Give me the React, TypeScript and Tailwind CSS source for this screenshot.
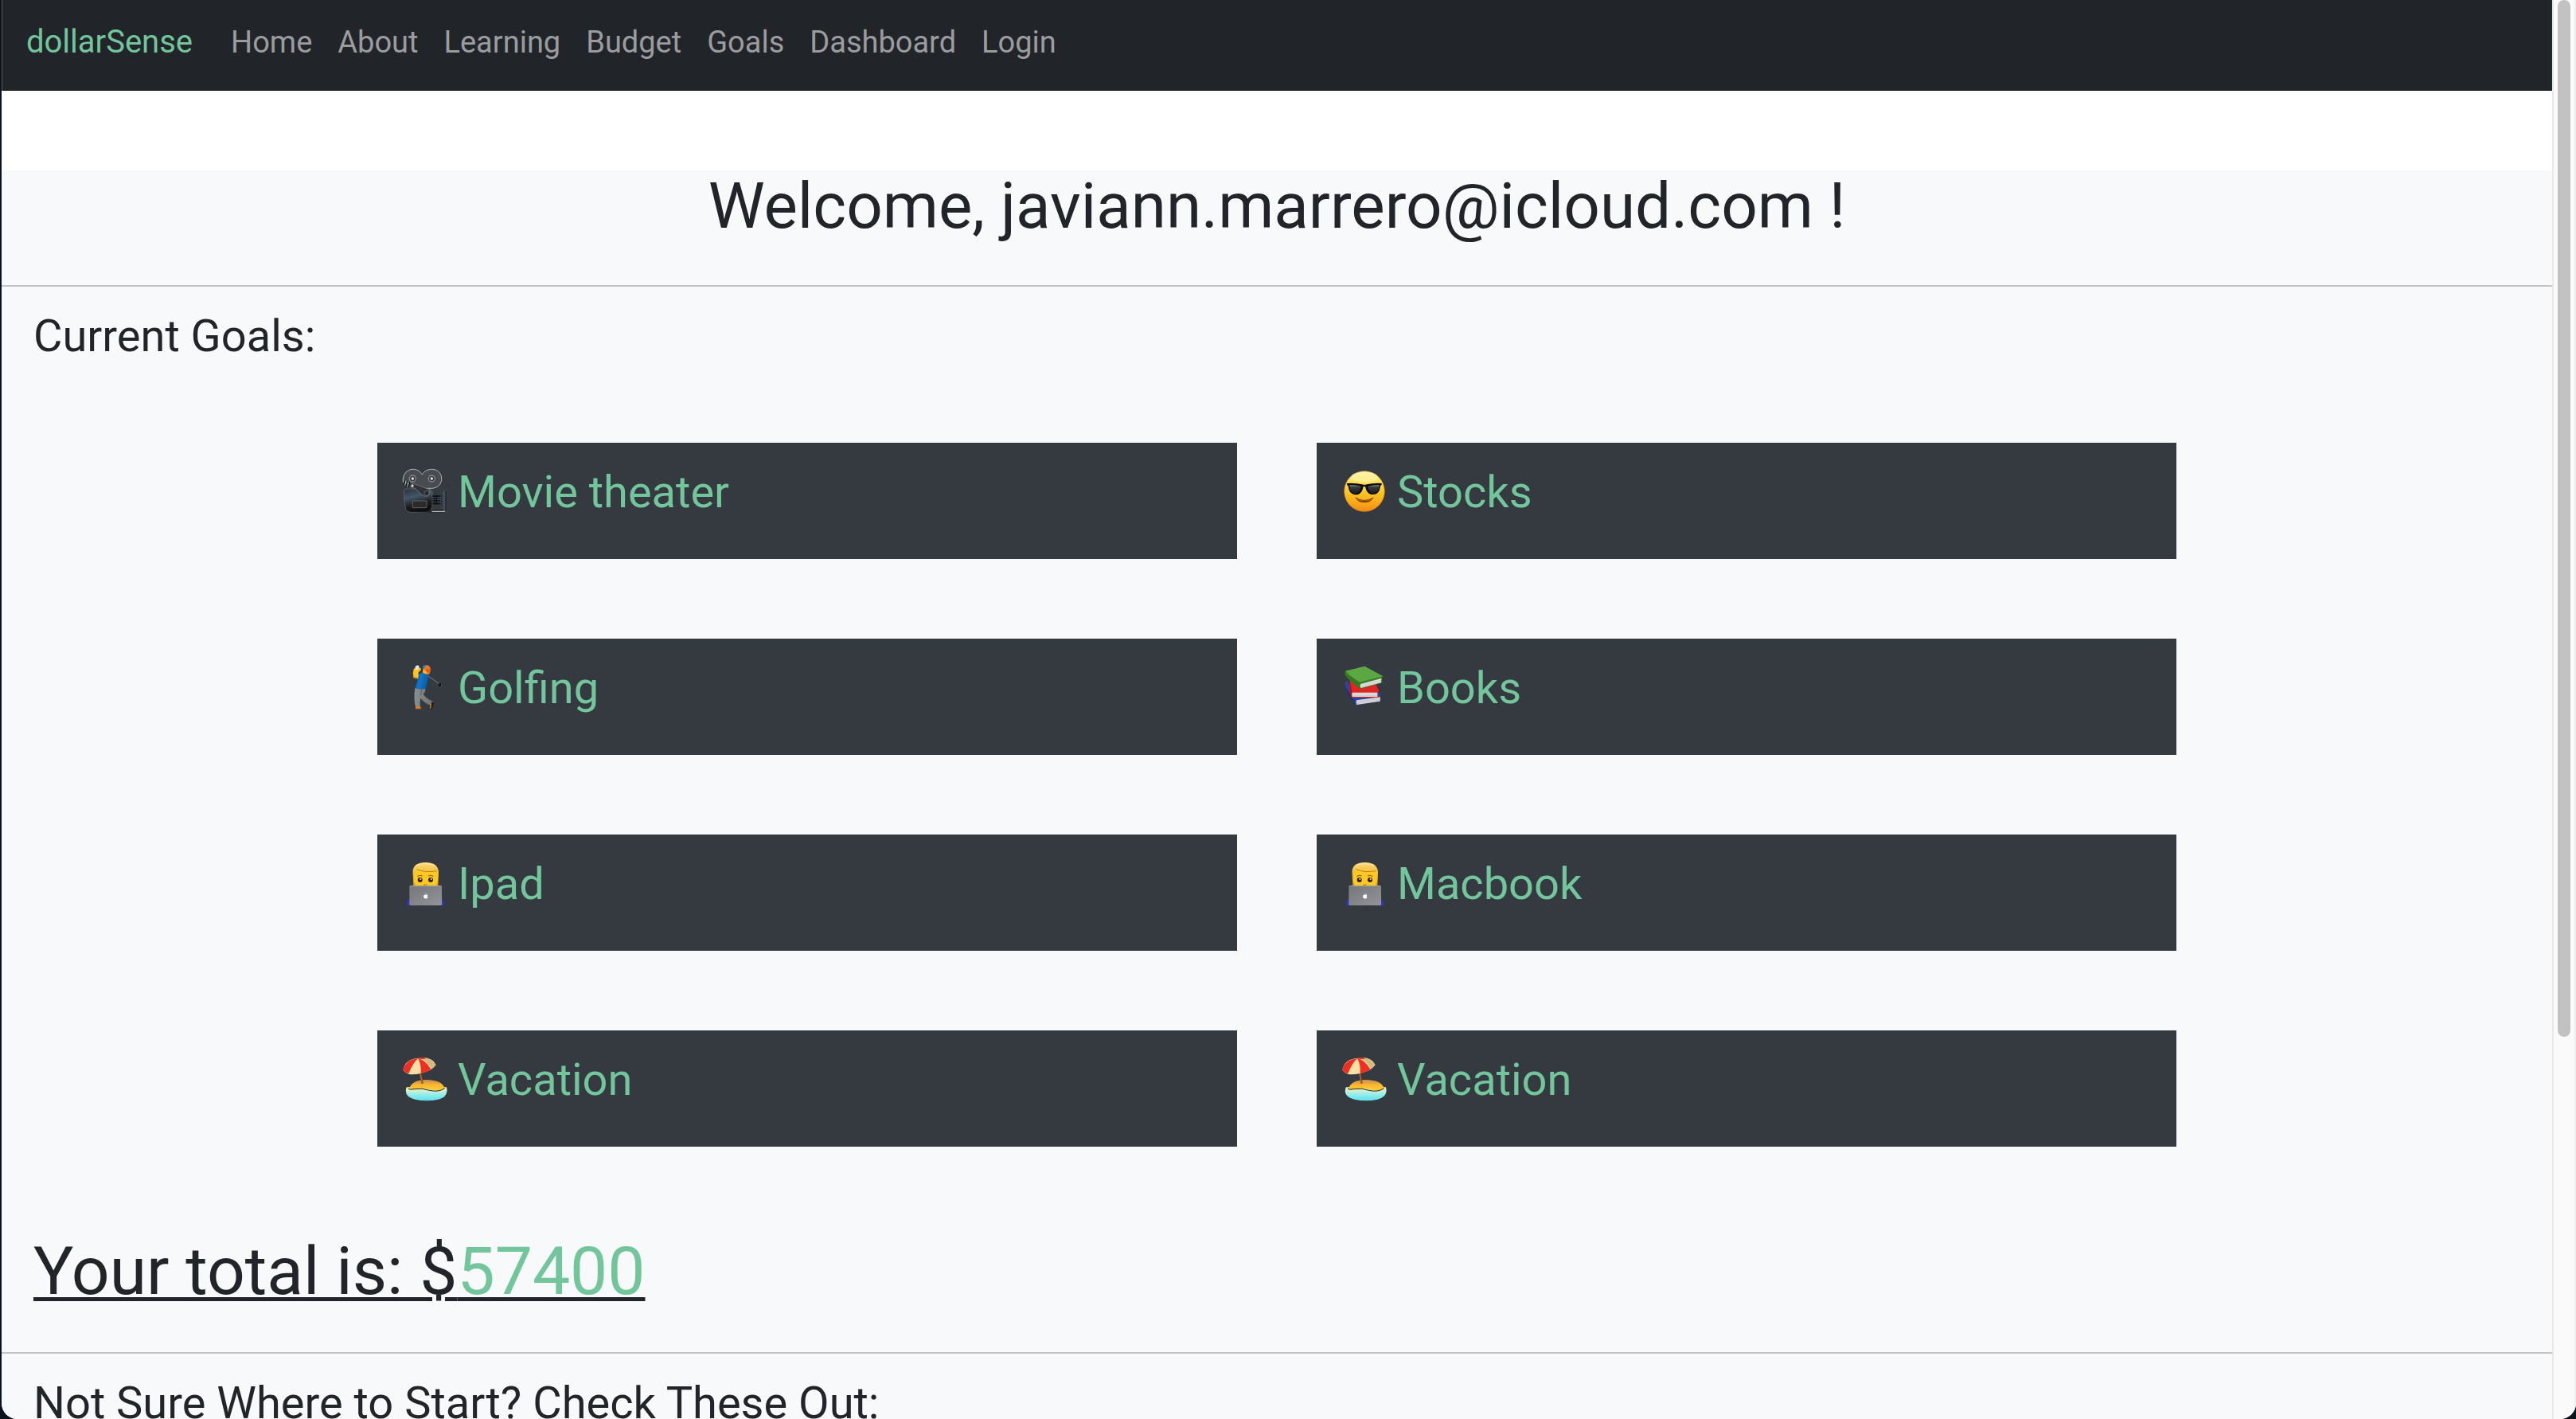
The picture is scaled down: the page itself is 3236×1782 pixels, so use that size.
import React from "react";

const links = ["Home", "About", "Learning", "Budget", "Goals", "Dashboard", "Login"];

const iconClass = "h-15 w-15 shrink-0";

function MovieCamera() {
  return (
    <svg className={iconClass} viewBox="132 138 180 180" aria-hidden="true">
      <defs>
        <linearGradient id="camBody" x1="0" y1="0" x2="0.3" y2="1">
          <stop offset="0" stopColor="#2c3034" />
          <stop offset="0.4" stopColor="#43566a" />
          <stop offset="0.75" stopColor="#1d1c1e" />
          <stop offset="1" stopColor="#0f0f10" />
        </linearGradient>
        <linearGradient id="camHood" x1="0" y1="0" x2="1" y2="0">
          <stop offset="0" stopColor="#15181b" />
          <stop offset="0.6" stopColor="#3c4852" />
          <stop offset="1" stopColor="#101214" />
        </linearGradient>
      </defs>
      <path d="M139 196C136 168 154 148 176 148c16 0 26 7 35 20 8-13 20-20 36-20 22 0 37 15 37 36 0 20-15 35-37 36h-46z" fill="#484c50" stroke="#b4b7ba" strokeWidth="3" />
      <circle cx="175" cy="183" r="12" fill="#34383b" stroke="#85898d" strokeWidth="4" />
      <circle cx="175" cy="183" r="5" fill="#e3e6e8" />
      <circle cx="247" cy="183" r="12" fill="#34383b" stroke="#85898d" strokeWidth="4" />
      <circle cx="247" cy="183" r="5" fill="#e3e6e8" />
      <path d="M142 232q0-10 8-10h82q16 2 17 12v52q-2 22-24 24h-58q-14-1-18-12-8-32-7-66z" fill="url(#camBody)" stroke="#666c71" strokeWidth="2" />
      <path d="M165 197l70 26q10 12-2 26-14 4-26-7l-20-20-26-10z" fill="#303438" stroke="#85898d" strokeWidth="2" />
      <circle cx="228" cy="238" r="9" fill="#25292c" stroke="#777c80" strokeWidth="2" />
      <path d="M146 192l-3 14M155 193l-4 19M164 195l-4 20" stroke="#0d0e0f" strokeWidth="4" />
      <path d="M150 192l-4 16M159 194l-4 20" stroke="#d5d8da" strokeWidth="2.5" />
      <circle cx="174" cy="210" r="5" fill="#d9dbdd" />
      <rect x="175" y="267" width="53" height="26" rx="2" fill="#2b2a2b" stroke="#7b8084" strokeWidth="2" />
      <rect x="250" y="246" width="34" height="34" fill="#15181b" />
      <path d="M250 254h32M250 262h32M250 271h32" stroke="#526370" strokeWidth="3" />
      <path d="M258 246v34M266 244v38" stroke="#0b0c0d" strokeWidth="3" />
      <path d="M282 240l22-16v86l-22-24z" fill="url(#camHood)" stroke="#586168" strokeWidth="1.5" />
      <path d="M288 236v54M294 232v64" stroke="#5b6a76" strokeWidth="2" />
      <path d="M180 309q60 3 68-8l40 0 8 9z" fill="#1a1b1c" />
      <path d="M247 307h50" stroke="#b9bcbe" strokeWidth="4" />
    </svg>
  );
}

function CoolFace() {
  return (
    <svg className={iconClass} viewBox="132 138 180 180" aria-hidden="true">
      <defs>
        <linearGradient id="faceFill" x1="0" y1="0" x2="0" y2="1">
          <stop offset="0" stopColor="#fdf0a0" />
          <stop offset="0.2" stopColor="#fdea6c" />
          <stop offset="0.5" stopColor="#fcc92b" />
          <stop offset="0.8" stopColor="#fba614" />
          <stop offset="1" stopColor="#ee8a1c" />
        </linearGradient>
        <linearGradient id="lens" x1="0" y1="0" x2="0" y2="1">
          <stop offset="0" stopColor="#7c8184" />
          <stop offset="0.3" stopColor="#34383a" />
          <stop offset="1" stopColor="#1c1e20" />
        </linearGradient>
      </defs>
      <circle cx="222" cy="231" r="76" fill="url(#faceFill)" stroke="#d9811c" strokeWidth="2" />
      <ellipse cx="222" cy="177" rx="50" ry="20" fill="#fff6c0" opacity="0.45" />
      <path d="M187 253q35 22 70 0-8 21-35 21t-35-21z" fill="#83470f" />
      <path d="M192 260q30 14 60 0-8 7-30 7t-30-7z" fill="#e9a021" />
      <path d="M155 201q34-2 58 4 9 3 18 0 24-6 57-4l-2 7-4 3c-2 20-9 32-27 32-18 1-26-12-29-28-4-4-5-4-9 0-2 16-11 29-28 29-19-1-26-14-28-33l-4-3z" fill="#0c0d0e" />
      <path d="M166 207q24-1 43 5-3 25-21 27c-15 0-21-10-22-32z" fill="url(#lens)" />
      <path d="M278 207q-24-1-43 5 3 25 21 27c15 0 21-10 22-32z" fill="url(#lens)" />
    </svg>
  );
}

function Golfer() {
  return (
    <svg className={iconClass} viewBox="132 126 180 180" aria-hidden="true">
      <defs>
        <linearGradient id="golfShirt" x1="0" y1="0" x2="1" y2="0.3">
          <stop offset="0" stopColor="#0c559f" />
          <stop offset="0.5" stopColor="#1175cb" />
          <stop offset="1" stopColor="#0b5aa6" />
        </linearGradient>
        <linearGradient id="golfPants" x1="0" y1="0" x2="1" y2="0">
          <stop offset="0" stopColor="#8c8f91" />
          <stop offset="1" stopColor="#6c6f72" />
        </linearGradient>
      </defs>
      <path d="M231 175l48 34" stroke="#85898c" strokeWidth="2.5" />
      <ellipse cx="279" cy="210" rx="7" ry="6" fill="#101112" />
      <path d="M284 206v10" stroke="#7b7e80" strokeWidth="2" />
      <path d="M214 148q0-11 11-12 14-1 17 12 2 14-5 22-8 4-17-2l-6-8z" fill="#e8791f" />
      <path d="M214 138q6-4 13-1-7 3-8 12l-6-2z" fill="#1580da" />
      <circle cx="232" cy="158" r="7" fill="#f04a1d" />
      <path d="M216 150l-4 14 14 8 6-8z" fill="#f5b51d" />
      <path d="M179 150l10-6q8 2 8 9v21l8-4 2 8-8 8-20-2q-5-16 0-34z" fill="#fcc419" />
      <path d="M194 145q11-2 13 6-2 9-13 12z" fill="#f7bd1c" />
      <path d="M185 141q7-7 14-3 2 9-5 17l-9-4z" fill="#e4e4e3" />
      <path d="M177 180l18 6" stroke="#e59413" strokeWidth="4" />
      <path d="M198 172q6-9 14-7l20 7q5 9-1 24l-7 30q-20 4-40-2l9-28z" fill="url(#golfShirt)" />
      <path d="M184 223q19 6 39 2 1 12-8 20 12 18 40 29l-11 14q-24-9-39-28-3 16-2 33H186q-8-28-2-70z" fill="url(#golfPants)" />
      <path d="M206 250l3-22" stroke="#5c5f62" strokeWidth="3" />
      <path d="M187 291h18l1 10h-21z" fill="#e57914" />
      <path d="M187 301h18" stroke="#4a4e84" strokeWidth="2" />
      <path d="M246 276q8-4 9 2-1 14-8 24-7-1-7-9z" fill="#2a1b12" />
      <path d="M244 280l-2 19" stroke="#d88d17" strokeWidth="4" />
    </svg>
  );
}

function BookStack() {
  return (
    <svg className={iconClass} viewBox="132 876 180 180" aria-hidden="true">
      <path d="M149 950l8-7 30 62 90-14 8 4-4 2v20l4 2-94 18-6-7-35-58z" fill="#2b459c" />
      <path d="M192 1018l90-12-1 16-88 13q-4-8-1-17z" fill="#d6d6da" />
      <path d="M193 1024l88-13M193 1030l88-13" stroke="#b5b6bd" strokeWidth="1.5" />
      <path d="M149 966l3 14 36 54-6-16z" fill="#1d2f77" />
      <path d="M167 942l98 12 12 32-5 3v16l5 3-102 0-8-20z" fill="#e02622" />
      <path d="M175 989h96v16h-96q-3-8 0-16z" fill="#dedede" />
      <path d="M176 995h95M176 1001h95" stroke="#bdbdbd" strokeWidth="1.5" />
      <path d="M167 946l8 40v22l-8-20z" fill="#a91517" />
      <path d="M149 908l74-18 69 38-3 4-1 16 6 3-88 25q-42-32-57-53z" fill="#357a20" />
      <path d="M150 908l73-18 69 38-86 22q-34-18-56-42z" fill="#5ca744" />
      <path d="M207 957l79-22-1 17-76 20q-6-7-2-15z" fill="#e0e0de" />
      <path d="M208 962l77-20M209 968l76-20" stroke="#b9bab8" strokeWidth="1.5" />
    </svg>
  );
}

function Technologist() {
  return (
    <svg className={iconClass} viewBox="132 864 180 180" aria-hidden="true">
      <defs>
        <linearGradient id="hair" x1="0" y1="0" x2="0" y2="1">
          <stop offset="0" stopColor="#fbd87a" />
          <stop offset="0.5" stopColor="#f2bb35" />
          <stop offset="1" stopColor="#dd9a14" />
        </linearGradient>
        <linearGradient id="laptop" x1="0" y1="0" x2="1" y2="1">
          <stop offset="0" stopColor="#75777b" />
          <stop offset="1" stopColor="#929498" />
        </linearGradient>
      </defs>
      <path d="M152 1041q1-20 14-28h116q12 8 13 28z" fill="#2b37c4" />
      <path d="M176 920q-4-40 48-41 50 1 49 41l-2 50h-93z" fill="url(#hair)" />
      <path d="M180 922q6-4 10-17 34 13 76 7 4 6 4 18 1 26-8 38h-75q-9-16-7-46z" fill="#fdc922" />
      <path d="M190 905q34 14 76 6" fill="none" stroke="#bf8419" strokeWidth="3" />
      <path d="M190 890q30-12 68 0" fill="none" stroke="#fce5a0" strokeWidth="4" />
      <path d="M193 932q9-7 19-2M234 930q10-5 19 2" fill="none" stroke="#a06512" strokeWidth="4" />
      <circle cx="203" cy="945" r="9" fill="#33200e" />
      <circle cx="243" cy="945" r="9" fill="#33200e" />
      <circle cx="205" cy="942" r="3" fill="#f5e9d8" />
      <circle cx="245" cy="942" r="3" fill="#f5e9d8" />
      <path d="M217 962q7 5 13 0" fill="none" stroke="#d97f17" strokeWidth="4" />
      <rect x="163" y="967" width="122" height="74" rx="4" fill="url(#laptop)" />
      <path d="M165 968h118" stroke="#a8aaad" strokeWidth="2.5" />
      <path d="M224 1001q8-4 7 2-2 4 1 7-3 8-8 5-6 2-8-6 0-10 8-8zM223 1000q1-5 4-6 0 5-4 6z" fill="#ffffff" />
    </svg>
  );
}

function BeachUmbrella() {
  return (
    <svg className={iconClass} viewBox="132 132 180 180" aria-hidden="true">
      <defs>
        <linearGradient id="water" x1="0" y1="0" x2="0" y2="1">
          <stop offset="0.2" stopColor="#d9efd0" />
          <stop offset="0.6" stopColor="#8cecec" />
          <stop offset="1" stopColor="#5fe0ea" />
        </linearGradient>
        <linearGradient id="sand" x1="0" y1="0" x2="0" y2="1">
          <stop offset="0" stopColor="#c98c4c" />
          <stop offset="0.5" stopColor="#fab932" />
          <stop offset="1" stopColor="#fccd2c" />
        </linearGradient>
      </defs>
      <path d="M152 256q-12 36 32 46 44 9 88 0 40-10 31-46z" fill="url(#water)" />
      <path d="M162 262q10-34 66-34 60 2 68 33-10 12-42 6-40-10-70-3-14 4-22-2z" fill="url(#sand)" />
      <path d="M159 262q5 5 22 1 30-5 58 5 34 8 57-8" fill="none" stroke="#2b2520" strokeWidth="3" />
      <path d="M204 200l8 42" stroke="#8c4a1d" strokeWidth="7" />
      <path d="M203 202l8 38" stroke="#c98040" strokeWidth="2" />
      <path d="M139 191q8-42 58-44 52-8 66 25-10 12-21 19-20 9-37 13-22 6-44 3-14-5-22-16z" fill="#f6e0a5" />
      <path d="M139 191q8-38 56-43-20 18-35 57-13-4-21-14z" fill="#ec2f24" />
      <path d="M196 148q26 4 49 41-19 12-39 16 2-34-10-57z" fill="#ee3023" />
      <path d="M197 147q34-6 48 7l17 18q-6 10-15 15-18-34-50-40z" fill="#d5b87c" />
      <path d="M197 146q14-4 28 1-6 5-28 1z" fill="#d2261d" />
      <circle cx="196" cy="146" r="3" fill="#b0301f" />
    </svg>
  );
}

const goals = [
  { name: "Movie theater", Icon: MovieCamera },
  { name: "Stocks", Icon: CoolFace },
  { name: "Golfing", Icon: Golfer },
  { name: "Books", Icon: BookStack },
  { name: "Ipad", Icon: Technologist },
  { name: "Macbook", Icon: Technologist },
  { name: "Vacation", Icon: BeachUmbrella },
  { name: "Vacation", Icon: BeachUmbrella },
];

export default function App() {
  return (
    <div className="h-screen overflow-hidden bg-[#0b141c] pl-[2px] font-[Roboto,sans-serif] text-[#212529]">
      <div className="flex h-full overflow-hidden rounded-b-[20px] bg-white">
        <div className="min-w-0 flex-1 overflow-hidden">
          <nav className="flex items-center border-l border-[#55585b] bg-[#212529] pt-[29px] pb-[37px] pl-[30px] leading-[48px]">
            <a href="#" className="mr-12 text-[40px] text-[#73c69c]">dollarSense</a>
            <div className="flex gap-8 text-[38px] text-[#9b9c9e]">
              {links.map((l) => (
                <a key={l} href="#">{l}</a>
              ))}
            </div>
          </nav>

          <main className="mt-[100px] bg-[#f8f9fb]">
            <h1 className="pb-[54px] text-center text-[80px] leading-[90px]">
              Welcome, javiann.marrero@icloud.com !
            </h1>
            <hr className="border-t-2 border-[#c3c4c6]" />
            <section className="px-10 pt-[30px]">
              <h2 className="text-[56px] leading-[64px]">Current Goals:</h2>
            </section>
            <ul className="mx-auto mt-[102px] grid w-[2260px] max-w-full grid-cols-2 gap-[100px]">
              {goals.map(({ name, Icon }, i) => (
                <li key={i} className="flex items-start gap-[11px] bg-[#343a40] px-[30px] pt-[30px] pb-[52px] text-[56px] leading-[64px] text-[#73c69c]">
                  <Icon />
                  <span>{name}</span>
                </li>
              ))}
            </ul>
            <h2 className="px-10 pt-[106px] pb-[50px] text-[84px] leading-[102px] underline decoration-[5px] underline-offset-4">
              Your total is: $<span className="text-[#73c69c]">57400</span>
            </h2>
            <hr className="border-t-2 border-[#c3c4c6]" />
            <section className="px-10 pt-[30px] pb-12">
              <h2 className="text-[56px] leading-[64px]">Not Sure Where to Start? Check These Out:</h2>
            </section>
          </main>
        </div>

        <div className="flex w-[30px] shrink-0 justify-center border-x-2 border-l-[#e8e8e8] border-r-[#eeeeee] bg-[#fafafa]">
          <div className="h-[1302px] w-4 rounded-full bg-[#c2c2c2]" />
        </div>
      </div>
    </div>
  );
}
